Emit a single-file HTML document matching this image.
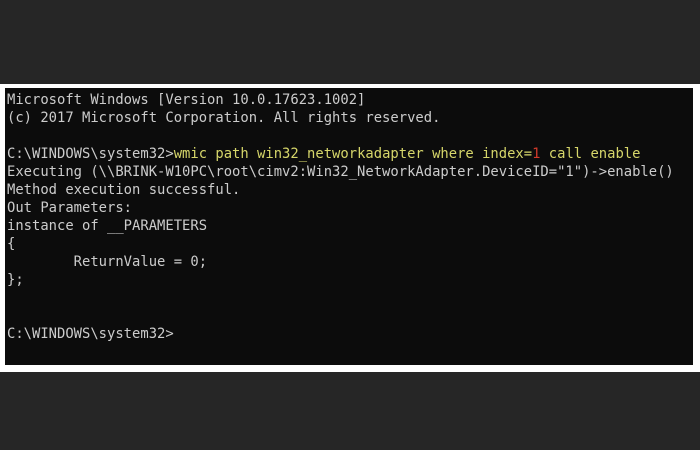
<!DOCTYPE html>
<html><head><style>
html,body{margin:0;padding:0;}
body{width:700px;height:450px;background:#262626;position:relative;overflow:hidden;}
.white{position:absolute;left:0;top:84px;width:700px;height:288px;background:#fff;}
.con{position:absolute;left:5px;top:88px;width:688px;height:277px;background:#0c0c0c;}
pre{position:absolute;left:7px;top:91px;margin:0;font-family:"DejaVu Sans Mono",monospace;font-size:13.85px;line-height:18px;color:#cccccc;}
.y{color:#d6d66a}.r{color:#d23a2a}
</style></head><body>
<div class="white"></div><div class="con"></div>
<pre>Microsoft Windows [Version 10.0.17623.1002]
(c) 2017 Microsoft Corporation. All rights reserved.

C:\WINDOWS\system32&gt;<span class="y">wmic path win32_networkadapter where index=<span class="r">1</span> call enable</span>
Executing (\\BRINK-W10PC\root\cimv2:Win32_NetworkAdapter.DeviceID="1")-&gt;enable()
Method execution successful.
Out Parameters:
instance of __PARAMETERS
{
        ReturnValue = 0;
};


C:\WINDOWS\system32&gt;</pre>
</body></html>
